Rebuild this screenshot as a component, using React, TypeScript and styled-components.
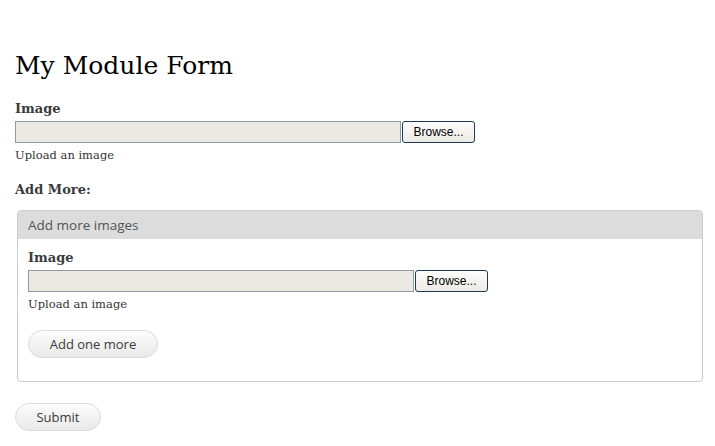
import React from "react";
import styled, { createGlobalStyle } from "styled-components";

const GlobalStyle = createGlobalStyle`
  body {
    margin: 0;
    background: #fff;
    font-family: "DejaVu Serif", Georgia, serif;
    color: #3b3b3b;
  }
`;

const Page = styled.form`
  padding: 48px 12px 16px 15px;
`;

const Title = styled.h1`
  margin: 0 0 16px;
  font-family: "DejaVu Serif", Georgia, serif;
  font-weight: normal;
  font-size: 25px;
  line-height: 36px;
  color: #000;
`;

const FormItem = styled.div`
  margin-bottom: 18px;
`;

const Label = styled.label`
  display: block;
  font-weight: bold;
  font-size: 13px;
  line-height: 18px;
  margin-bottom: 3px;
  color: #3b3b3b;
`;

const FileRow = styled.div`
  display: flex;
  height: 22px;
`;

const FileText = styled.div`
  width: 384px;
  border: 1px solid #8e9aa6;
  background: #ece9e3;
`;

const BrowseButton = styled.button`
  margin-left: 1px;
  width: 73px;
  height: 22px;
  padding: 0;
  border: 1px solid #1d3a54;
  border-radius: 3px;
  background: linear-gradient(#fdfdfd, #eceae4);
  font-family: "Liberation Sans", Arial, sans-serif;
  font-size: 12px;
  color: #000;
`;

const Description = styled.div`
  font-size: 11.5px;
  line-height: 16px;
  margin-top: 4px;
  color: #333;
`;

const Fieldset = styled.fieldset`
  margin: 11px 0 0 2px;
  padding: 0;
  border: 1px solid #ccc;
  border-radius: 4px;
  min-width: 0;
`;

const Legend = styled.div`
  height: 28px;
  padding-left: 10px;
  background: #dcdcdc;
  border-radius: 3px 3px 0 0;
  font-family: "Open Sans", sans-serif;
  font-size: 13.5px;
  line-height: 29px;
  color: #555;
`;

const FieldsetBody = styled.div`
  padding: 10px 10px 23px 10px;
`;

const PillButton = styled.button<{ $width: number }>`
  display: block;
  width: ${({ $width }) => $width}px;
  height: 28px;
  padding: 0;
  border: 1px solid #dcdcdc;
  border-radius: 15px;
  background: linear-gradient(#fcfcfc, #e9e9e9);
  font-family: "Open Sans", sans-serif;
  font-size: 13px;
  color: #3a3a3a;
`;

const Actions = styled.div`
  margin-top: 21px;
`;

export default function App() {
  return (
    <>
      <GlobalStyle />
      <Page onSubmit={(e) => e.preventDefault()}>
        <Title>My Module Form</Title>
        <FormItem>
          <Label>Image</Label>
          <FileRow>
            <FileText />
            <BrowseButton type="button">Browse...</BrowseButton>
          </FileRow>
          <Description>Upload an image</Description>
        </FormItem>
        <Label>Add More:</Label>
        <Fieldset>
          <Legend>Add more images</Legend>
          <FieldsetBody>
            <FormItem>
              <Label>Image</Label>
              <FileRow>
                <FileText />
                <BrowseButton type="button">Browse...</BrowseButton>
              </FileRow>
              <Description>Upload an image</Description>
            </FormItem>
            <PillButton type="button" $width={130}>
              Add one more
            </PillButton>
          </FieldsetBody>
        </Fieldset>
        <Actions>
          <PillButton type="submit" $width={86}>
            Submit
          </PillButton>
        </Actions>
      </Page>
    </>
  );
}
